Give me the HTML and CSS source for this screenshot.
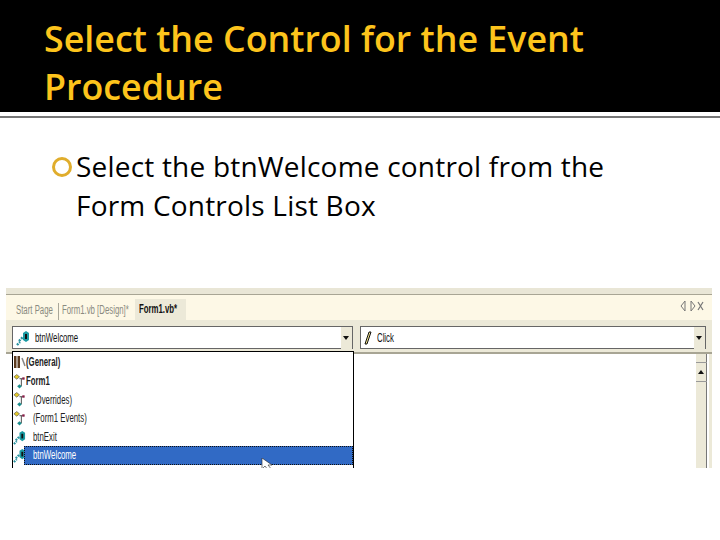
FILE: index.html
```html
<!DOCTYPE html>
<html lang="en">
<head>
  <meta charset="UTF-8" />
  <title>Select the Control for the Event Procedure</title>
  <link rel="stylesheet" href="styles.css">
</head>
<body>

  <svg class="defs" width="0" height="0">
    <symbol id="ctl" viewBox="0 0 14 16">
      <path d="M1 15 L4 12 M3 11 L7 7" stroke="#2a93a0" stroke-width="2.4" stroke-dasharray="2 1" fill="none"/>
      <path d="M7 3 L10 1 L13 3 L13 10 L10 12 L7 10 Z" fill="#1a9aa3"/>
      <path d="M9 4 L11 4 L11 9 L9 9 Z" fill="#111"/>
    </symbol>
    <symbol id="cls" viewBox="0 0 14 16">
      <path d="M1 3 L4 0.5 L7 3 L4 5.5 Z" fill="#e3c92c" stroke="#555" stroke-width="0.7"/>
      <path d="M7 5 H12 M9 5 V13" stroke="#444" stroke-width="1" fill="none"/>
      <path d="M10 3.5 L12.5 3.5 L12.5 6 L10 6 Z" fill="#8a1f4a"/>
      <path d="M7 11 L9.5 13 L7 15.5 L4.5 13 Z" fill="#1c8c8c"/>
    </symbol>
  </svg>

  <header class="title-bar">
    <h1>Select the Control for the Event Procedure</h1>
  </header>
  <div class="rule"></div>

  <ul class="bullets">
    <li>Select the btnWelcome control from the Form Controls List Box</li>
  </ul>

  <div class="shot">
    <div class="tabs">
      <div class="tab first"><span class="sq">Start Page</span></div>
      <div class="tab second"><span class="sq">Form1.vb [Design]*</span></div>
      <div class="tab active"><span class="sq">Form1.vb*</span></div>
      <div class="tab-tools">
        <svg width="24" height="12" viewBox="0 0 24 12">
          <path d="M5 1 L1 6 L5 11 Z M11 1 L15 6 L11 11 Z" fill="none" stroke="#777"/>
          <path d="M18 2 L23 10 M23 2 L18 10" stroke="#777" stroke-width="1.2"/>
        </svg>
      </div>
    </div>

    <div class="combos">
      <div class="combo">
        <svg class="combo-icon" width="14" height="16"><use href="#ctl"/></svg>
        <span class="combo-text sq">btnWelcome</span>
        <span class="combo-btn"></span>
      </div>
      <div class="combo">
        <svg class="combo-icon bolt" width="8" height="14" viewBox="0 0 8 14">
          <path d="M5 1 L7 1 L3 13 L1 13 Z" fill="#f3e58a" stroke="#111"/>
        </svg>
        <span class="combo-text sq">Click</span>
        <span class="combo-btn"></span>
      </div>
    </div>

    <div class="code">
      <div class="scroll">
        <div class="scroll-up"></div>
      </div>
      <ul class="list">
        <li class="bold">
          <svg width="13" height="14" viewBox="0 0 13 14">
            <path d="M1 1 H3.5 V13 H1 Z M4.5 1 H7 V13 H4.5 Z" fill="#5a3a1e"/>
            <path d="M9 3 L12 11" stroke="#888" stroke-width="1.5"/>
          </svg>
          <span class="sq">(General)</span>
        </li>
        <li class="bold"><svg width="13" height="15"><use href="#cls"/></svg><span class="sq">Form1</span></li>
        <li class="sub"><svg width="13" height="15"><use href="#cls"/></svg><span class="sq">(Overrides)</span></li>
        <li class="sub"><svg width="13" height="15"><use href="#cls"/></svg><span class="sq">(Form1 Events)</span></li>
        <li class="sub"><svg width="13" height="15"><use href="#ctl"/></svg><span class="sq">btnExit</span></li>
        <li class="picked"><svg width="13" height="15"><use href="#ctl"/></svg><div class="bar"><span class="sq">btnWelcome</span></div></li>
      </ul>
      <svg class="cursor" width="12" height="12" viewBox="0 0 12 12">
        <path d="M1 0 L1 11 L4 8 L7 12 L11 12 L7 7 L11 7 Z" fill="#fff" stroke="#222" stroke-width="0.6"/>
      </svg>
    </div>
  </div>

</body>
</html>
```

FILE: styles.css
```css
* { box-sizing: border-box; margin: 0; padding: 0; }
body {
  font-family: 'Open Sans', sans-serif;
  background: #fff;
  color: #000;
  width: 720px;
  height: 540px;
  overflow: hidden;
}
.defs { position: absolute; }

.title-bar {
  background: #000;
  height: 112px;
  padding: 14px 44px 0;
}
.title-bar h1 {
  font-size: 35.8px;
  line-height: 48px;
  font-weight: 600;
  color: #fdc41c;
}
.rule {
  height: 2px;
  margin-top: 4px;
  background: #777;
}

.bullets {
  list-style: none;
  margin: 29px 100px 0 76px;
  font-size: 28px;
  line-height: 39px;
  letter-spacing: 0.2px;
  position: relative;
}
.bullets li::before {
  content: "";
  box-sizing: border-box;
  position: absolute;
  left: -24px;
  top: 10px;
  width: 20px;
  height: 20px;
  border: 3.5px solid #e0ad2c;
  border-radius: 50%;
}

.shot {
  margin: 63px 8px 0 6px;
  height: 180px;
  background: #ece9d8;
  font-family: 'Liberation Sans', sans-serif;
  font-size: 12px;
  overflow: hidden;
  border-top: 6px solid #e9e6d6;
}
/* the screenshot in the slide is squeezed sideways */
.sq {
  display: inline-block;
  white-space: nowrap;
  transform: scaleX(0.65);
  transform-origin: left center;
}
.tabs {
  height: 26px;
  display: flex;
  align-items: flex-end;
  background: #fdf8e6;
  border-top: 1px solid #a8a594;
  padding-left: 7px;
  color: #8a8a80;
}
.tab {
  padding: 0 0 3px 3px;
  white-space: nowrap;
}
.tab.first { width: 46px; border-right: 1px solid #aaa89a; }
.tab.second { width: 76px; }
.tab.active {
  width: 51px;
  background: #ece9d8;
  color: #111;
  font-weight: 700;
  height: 21px;
  line-height: 21px;
  padding: 0 0 0 4px;
}
.tab-tools {
  margin-left: auto;
  padding: 0 8px 5px 0;
}

.combos {
  height: 34px;
  display: flex;
  gap: 7px;
  padding: 6px 6px 0;
  background: #ece9d8;
  border-bottom: 2px solid #a8a594;
}
.combo {
  flex: 1;
  height: 23px;
  background: #fff;
  border: 1px solid #666;
  display: flex;
  align-items: center;
  padding-left: 3px;
  color: #111;
}
.combo:first-child { flex: 0 0 341px; }
.combo-text { margin-left: 5px; }
.bolt + .combo-text { margin-left: 5px; }
.combo-btn {
  margin-left: auto;
  width: 11px;
  height: 22px;
  background: #ece9d8;
  position: relative;
}
.combo-btn::after {
  content: "";
  position: absolute;
  left: 2px;
  top: 9px;
  border-left: 3px solid transparent;
  border-right: 3px solid transparent;
  border-top: 4px solid #111;
}

.code {
  position: relative;
  height: 114px;
  background: #fff;
  border-right: 3px solid #ece9d8;
}
.scroll {
  position: absolute;
  right: 2px;
  top: 0;
  width: 11px;
  height: 114px;
  background: #ece9d8;
  border-right: 1px solid #777;
}
.scroll-up {
  position: absolute;
  left: 0;
  top: 8px;
  width: 11px;
  height: 20px;
  border-top: 1px solid #999;
  border-bottom: 1px solid #999;
}
.scroll-up::after {
  content: "";
  position: absolute;
  left: 2px;
  top: 7px;
  border-left: 3px solid transparent;
  border-right: 3px solid transparent;
  border-bottom: 4px solid #111;
}

.list {
  position: absolute;
  left: 6px;
  top: -3px;
  width: 342px;
  height: 117px;
  list-style: none;
  background: #fff;
  border: 1px solid #000;
  border-bottom: none;
  padding-top: 1px;
}
.list li {
  height: 18.7px;
  display: flex;
  align-items: center;
  color: #222;
}
.list svg { flex: none; }
.list .bold { font-weight: 700; }
.list .sub .sq { margin-left: 7px; }
.list .bar {
  flex: 1;
  padding-left: 8px;
  height: 19px;
  line-height: 17px;
  background: #316ac5;
  color: #fff;
  border: 1px dotted #111;
  margin-left: -2px;
}
.cursor {
  position: absolute;
  left: 255px;
  top: 104px;
}
```
